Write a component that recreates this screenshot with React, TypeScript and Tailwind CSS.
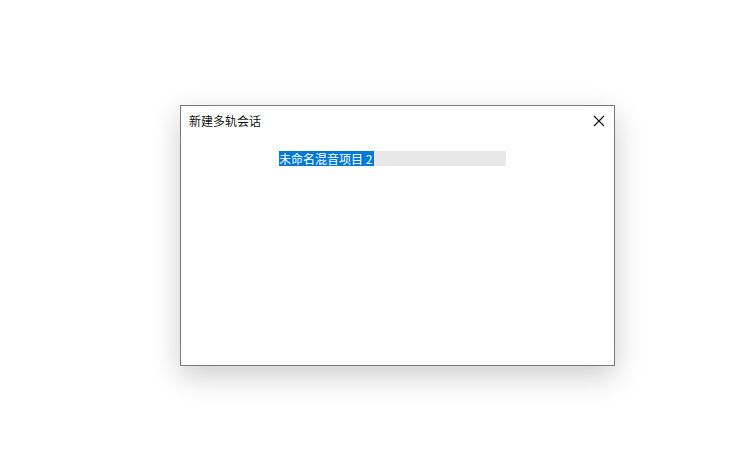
export default function App() {
  return (
    <div
      className="w-[735px] h-[451px] bg-white pt-[105px] pl-[180px]"
      style={{ fontFamily: '"Noto Sans CJK SC", "Noto Sans", sans-serif' }}
    >
      <div className="w-[435px] h-[261px] bg-white border border-[#7a7a7a] shadow-[0_10px_28px_rgba(0,0,0,0.2)] flex flex-col">
        {/* title bar */}
        <div className="h-[29px] flex items-center justify-between pl-[8px] pr-[8px]">
          <span className="text-[12px] leading-none text-[#111]">新建多轨会话</span>
          <svg width="12" height="12" viewBox="0 0 12 12" className="mr-[1px] mt-[1px]">
            <path d="M1 1 L11 11 M11 1 L1 11" stroke="#111" strokeWidth="1.1" />
          </svg>
        </div>
        {/* name field */}
        <div className="pt-[16px] pl-[98px]">
          <div className="w-[227px] h-[15px] bg-[#e8e8e8] flex items-center">
            <span className="h-full bg-[#0078d7] text-white text-[12px] leading-[15px] pr-[2px] whitespace-nowrap">
              未命名混音项目 2
            </span>
          </div>
        </div>
      </div>
    </div>
  );
}
